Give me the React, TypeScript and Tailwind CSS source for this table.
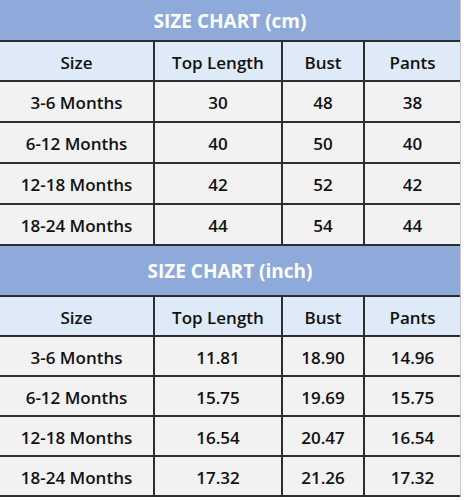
const CM = [
  ["3-6 Months", "30", "48", "38"],
  ["6-12 Months", "40", "50", "40"],
  ["12-18 Months", "42", "52", "42"],
  ["18-24 Months", "44", "54", "44"],
];

const INCH = [
  ["3-6 Months", "11.81", "18.90", "14.96"],
  ["6-12 Months", "15.75", "19.69", "15.75"],
  ["12-18 Months", "16.54", "20.47", "16.54"],
  ["18-24 Months", "17.32", "21.26", "17.32"],
];

const HEAD = ["Size", "Top Length", "Bust", "Pants"];
const COLS = "grid grid-cols-[155px_128px_82px_1fr]";

function Row({ cells, bg, h }: { cells: string[]; bg: string; h: string }) {
  return (
    <div className={`${COLS} ${bg} ${h} border-b-2 border-[#2e2e2e]`}>
      {cells.map((c, i) => (
        <div
          key={i}
          className={`flex items-center justify-center pt-[3px] text-[17px] font-semibold text-[#111] ${i < 3 ? "border-r-2 border-[#2e2e2e]" : ""}`}
        >
          {c}
        </div>
      ))}
    </div>
  );
}

function Chart({ title, rows, titleH, rowH }: { title: string; rows: string[][]; titleH: string; rowH: string }) {
  return (
    <div>
      <div className={`${titleH} bg-[#8eaadb] border-b-2 border-[#2e2e2e] flex items-center justify-center pt-[2px] text-white text-[19px] font-bold`}>
        {title}
      </div>
      <Row cells={HEAD} bg="bg-[#deeaf7]" h="h-[40px]" />
      {rows.map((r, i) => (
        <Row key={i} cells={r} bg="bg-[#f2f2f2]" h={rowH} />
      ))}
    </div>
  );
}

export default function App() {
  return (
    <div className="w-[464px] h-[500px] bg-white" style={{ fontFamily: '"Open Sans", "Liberation Sans", sans-serif' }}>
      <div className="w-[461px] border-r border-[#c8c8c8]">
        <Chart title="SIZE CHART (cm)" rows={CM} titleH="h-[42px]" rowH="h-[41px]" />
        <Chart title="SIZE CHART (inch)" rows={INCH} titleH="h-[51px]" rowH="h-[40px]" />
      </div>
    </div>
  );
}
